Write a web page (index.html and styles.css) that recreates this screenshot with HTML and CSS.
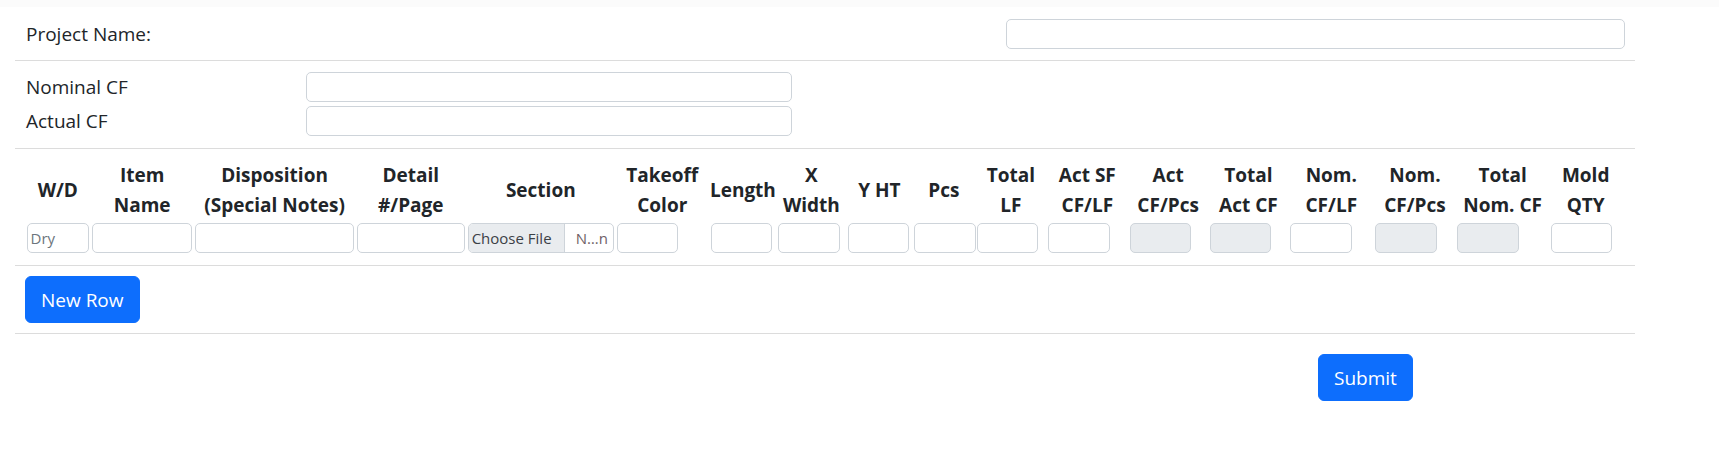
FILE: index.html
```html
<!DOCTYPE html>
<html lang="en">
<head>
<meta charset="utf-8">
<title>Takeoff</title>
<link rel="stylesheet" href="styles.css">
</head>
<body>
<div class="topbar"></div>
<form class="container">
  <div class="project-row">
    <label class="lbl">Project Name:</label>
    <input class="field" type="text">
  </div>
  <hr class="rule">
  <div class="cf-grid">
    <label class="lbl">Nominal CF</label>
    <input class="field" type="text">
    <label class="lbl">Actual CF</label>
    <input class="field" type="text">
  </div>
  <hr class="rule">
  <div class="takeoff">
    <div class="th">W/D</div>
    <div class="th">Item<br>Name</div>
    <div class="th">Disposition<br>(Special Notes)</div>
    <div class="th">Detail<br>#/Page</div>
    <div class="th">Section</div>
    <div class="th">Takeoff<br>Color</div>
    <div class="th">Length</div>
    <div class="th">X<br>Width</div>
    <div class="th">Y HT</div>
    <div class="th">Pcs</div>
    <div class="th">Total<br>LF</div>
    <div class="th">Act SF<br>CF/LF</div>
    <div class="th">Act<br>CF/Pcs</div>
    <div class="th">Total<br>Act CF</div>
    <div class="th">Nom.<br>CF/LF</div>
    <div class="th">Nom.<br>CF/Pcs</div>
    <div class="th">Total<br>Nom. CF</div>
    <div class="th">Mold<br>QTY</div>

    <input class="cell wide" type="text" placeholder="Dry">
    <input class="cell wide" type="text">
    <input class="cell wide" type="text">
    <input class="cell wide" type="text">
    <div class="cell wide file">
      <span class="file-btn">Choose File</span>
      <span class="file-name">N…n</span>
    </div>
    <input class="cell" type="text">
    <input class="cell" type="text">
    <input class="cell" type="text">
    <input class="cell" type="text">
    <input class="cell" type="text">
    <input class="cell" type="text">
    <input class="cell" type="text">
    <input class="cell" type="text" disabled>
    <input class="cell" type="text" disabled>
    <input class="cell" type="text">
    <input class="cell" type="text" disabled>
    <input class="cell" type="text" disabled>
    <input class="cell" type="text">
  </div>
  <hr class="rule">
  <div class="actions">
    <button type="button" class="btn">New Row</button>
  </div>
  <hr class="rule">
  <div class="submit-row">
    <button type="submit" class="btn">Submit</button>
  </div>
</form>
</body>
</html>
```

FILE: styles.css
```css
* { box-sizing: border-box; }

body {
  margin: 0;
  font-family: "Open Sans", "Noto Sans", sans-serif;
  font-size: 19px;
  line-height: 30px;
  color: #212529;
  background: #ffffff;
}

.topbar {
  height: 7px;
  background: #fbfbfb;
}

.container {
  margin-left: 15px;
  width: 1620px;
}

.rule {
  border: 0;
  height: 1px;
  margin: 0;
  background: #dcdcdc;
}

.lbl {
  display: block;
  padding-left: 1px;
}

.field {
  height: 30px;
  border: 1px solid #ced4da;
  border-radius: 5px;
  background: #fff;
  font: inherit;
  padding: 0 8px;
  outline: none;
}

.project-row {
  display: grid;
  grid-template-columns: 1fr 619px;
  align-items: center;
  padding: 12px 10px 11px;
}

.cf-grid {
  display: grid;
  grid-template-columns: 281px 486px;
  grid-auto-rows: 30px;
  row-gap: 4px;
  align-items: center;
  padding: 11px 10px 12px;
}

.cf-grid .field { width: 486px; }

.takeoff {
  display: grid;
  grid-template-columns: 65.6px 103.2px 161.6px 110.8px 149.2px 93.8px 67.5px 69.4px 66.6px 62.6px 71.4px 81.4px 80.2px 80.4px 85.4px 82px 93.2px 73px;
  grid-template-rows: 60px 30px;
  row-gap: 3px;
  padding: 11px 10px 12px;
}

.th {
  align-self: center;
  text-align: center;
  font-weight: 700;
  line-height: 30px;
  white-space: nowrap;
}

.cell {
  justify-self: start;
  width: 61.5px;
  height: 30px;
  margin-left: 1.5px;
  border: 1px solid #ced4da;
  border-radius: 5px;
  background: #fff;
  font-family: inherit;
  font-size: 15px;
  color: #212529;
  padding: 0 3px;
  outline: none;
}

.cell::placeholder { color: #6c757d; }

.cell:disabled { background: #e9ecef; }

.cell.wide { width: calc(100% - 3px); }

.file {
  display: flex;
  align-items: center;
  overflow: hidden;
  padding: 0;
}

.file-btn {
  height: 100%;
  width: 96px;
  flex: none;
  display: flex;
  align-items: center;
  padding-left: 3px;
  background: #e9ecef;
  border-right: 1px solid #ced4da;
  color: #3b4046;
  font-size: 15px;
}

.file-name {
  flex: 1;
  text-align: right;
  padding-right: 5px;
  color: #6f5f66;
  font-size: 15px;
}

.actions {
  padding: 10px 10px 10px;
}

.btn {
  height: 47px;
  padding: 0 15px;
  border: 1px solid #0d6efd;
  border-radius: 6px;
  background: #0d6efd;
  color: #ffffff;
  font-family: inherit;
  font-size: 19px;
  line-height: 30px;
  cursor: pointer;
}

.submit-row {
  display: grid;
  grid-template-columns: 1303px auto;
  padding-top: 20px;
}

.submit-row .btn { grid-column: 2; justify-self: start; }
```
